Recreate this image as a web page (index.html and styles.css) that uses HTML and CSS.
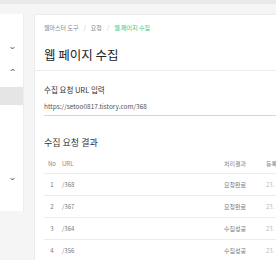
FILE: index.html
```html
<!DOCTYPE html>
<html>
<head>
    <meta charset="utf-8">
    <link rel="stylesheet" href="styles.css">
    <title>웹 페이지 수집</title>
</head>
<body>

<div class="topbar"></div>

<div class="wrapper">
    <!-- left menu, mostly cut off -->
    <div class="side">
        <div class="side-item"><span class="chev">&#8964;</span></div>
        <div class="side-item"><span class="chev up">&#8964;</span></div>
        <div class="side-sub active"></div>
        <div class="side-sub"></div>
        <div class="side-sub"></div>
        <div class="side-sub"></div>
        <div class="side-item last"><span class="chev">&#8964;</span></div>
    </div>

    <div class="card">
        <div class="card-head">
            <div class="crumbs">
                <span>웹마스터 도구</span><span class="sep">/</span>
                <span>요청</span><span class="sep">/</span>
                <span class="here">웹 페이지 수집</span>
            </div>
            <h1>웹 페이지 수집</h1>
        </div>

        <div class="card-body">
            <div class="label">수집 요청 URL 입력</div>
            <div class="url-input">https://setoo0817.tistory.com/368</div>

            <h2>수집 요청 결과</h2>
            <div class="tbl">
                <div class="row head">
                    <span class="no">No</span><span>URL</span><span class="res">처리결과</span><span class="date">등록</span>
                </div>
                <div class="row">
                    <span class="no">1</span><span>/368</span><span class="res">요청완료</span><span class="date">23.</span>
                </div>
                <div class="row">
                    <span class="no">2</span><span>/367</span><span class="res">요청완료</span><span class="date">23.</span>
                </div>
                <div class="row">
                    <span class="no">3</span><span>/364</span><span class="res">수집성공</span><span class="date">23.</span>
                </div>
                <div class="row">
                    <span class="no">4</span><span>/356</span><span class="res">수집성공</span><span class="date">23.</span>
                </div>
            </div>
        </div>
    </div>
</div>

</body>
</html>
```

FILE: styles.css
```css
* {margin: 0; padding: 0; box-sizing: border-box;}

html, body {height: 100%; overflow: hidden;}
body {
    background: #f5f5f6;
    font-family: "Noto Sans CJK KR", "Noto Sans", sans-serif;
    color: #333;
}

.topbar {height: 4px; background: #e8e9eb;}

.wrapper {
    display: flex;
    align-items: flex-start;
    gap: 10px;
    padding-top: 10px;
}

/* sidebar */
.side {
    flex: 0 0 24px;
    height: 197px;
    background: #fff;
    border-right: 1px solid #ececec;
    padding-top: 22px;
}
.side-item {height: 23px; display: flex; align-items: center; justify-content: center; padding-left: 1px;}
.side-item.last {margin-top: 8px;}
.chev {font-size: 8px; color: #666; line-height: 1; display: block; transform: scaleX(1.3) translateY(-2px);}
.chev.up {transform: scaleX(1.3) rotate(180deg) translateY(-1px);}
.side-sub {height: 18px;}
.side-sub.active {background: #e5e5e5; margin-top: 5px;}

/* main card */
.card {
    flex: 0 0 300px;
    background: #fff;
    border: 1px solid #ececec;
    height: 260px;
}
.card-head {
    padding: 9px 9px 0;
    height: 56px;
    border-bottom: 1px solid #ececec;
}
.crumbs {font-size: 6px; color: #888; line-height: 8px; display: flex; gap: 3px;}
.crumbs .sep {color: #bbb; padding: 0 2px;}
.crumbs .here {color: #34c47c;}
h1 {font-size: 12.5px; font-weight: 400; color: #222; line-height: 16px; margin-top: 15px;}

.card-body {padding: 14px 9px 0;}
.label {font-size: 7.5px; color: #333; line-height: 10px;}
.url-input {
    font-size: 6.5px;
    color: #555;
    line-height: 9px;
    margin-top: 7px;
    padding-bottom: 4px;
    border-bottom: 1px solid #d6d6d6;
}
h2 {font-size: 9px; font-weight: 400; color: #333; line-height: 12px; margin-top: 21px;}

.tbl {margin-top: 5px;}
.row {
    display: grid;
    grid-template-columns: 18px 144px 40px 40px;
    height: 22px;
    align-items: center;
    font-size: 6px;
    color: #777;
    border-bottom: 1px solid #ececec;
}
.row.head {height: 20px; color: #888;}
.no {text-align: center; padding-right: 2px;}
.res {text-align: right;}
.date {padding-left: 20px; color: #bbb;}
.row.head .date {color: #888;}
```
